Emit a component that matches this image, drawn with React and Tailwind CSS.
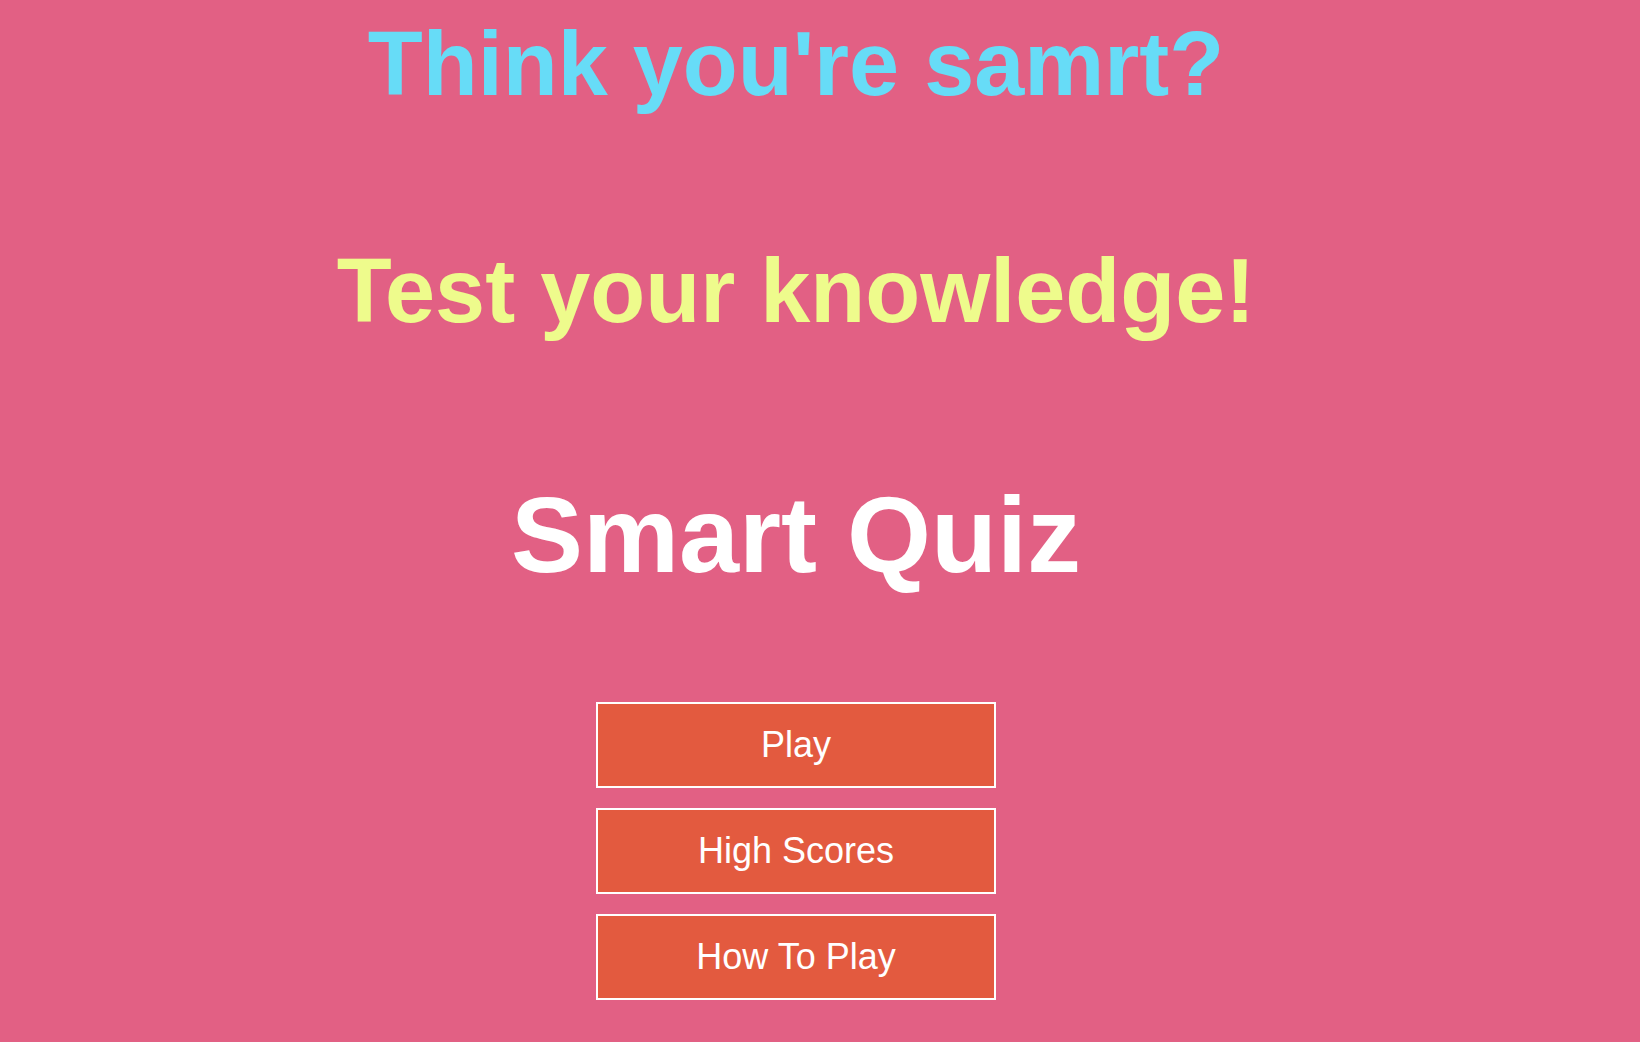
import React from 'react';

const menu = ['Play', 'High Scores', 'How To Play'];

const App = () => {
  return (
    <div className="min-h-screen w-full bg-[#e26084] font-['Liberation_Sans',Arial,sans-serif] overflow-hidden">
      <div className="w-[1592px] flex flex-col items-center">
        <h1 className="mt-[19px] text-[90px] leading-none font-bold text-[#67dcf7] whitespace-nowrap">
          Think you're samrt?
        </h1>
        <h2 className="mt-[137px] text-[90px] leading-none font-bold text-[#eefb8c] whitespace-nowrap">
          Test your knowledge!
        </h2>
        <h1 className="mt-[145px] text-[108px] leading-none font-bold text-white whitespace-nowrap">
          Smart Quiz
        </h1>
        <div className="mt-[113px] flex flex-col gap-[20px]">
          {menu.map((label) => (
            <button
              key={label}
              className="w-[400px] h-[86px] bg-[#e35a3f] border-2 border-white text-white text-[36px] flex items-center justify-center"
            >
              {label}
            </button>
          ))}
        </div>
      </div>
    </div>
  );
};

export default App;
